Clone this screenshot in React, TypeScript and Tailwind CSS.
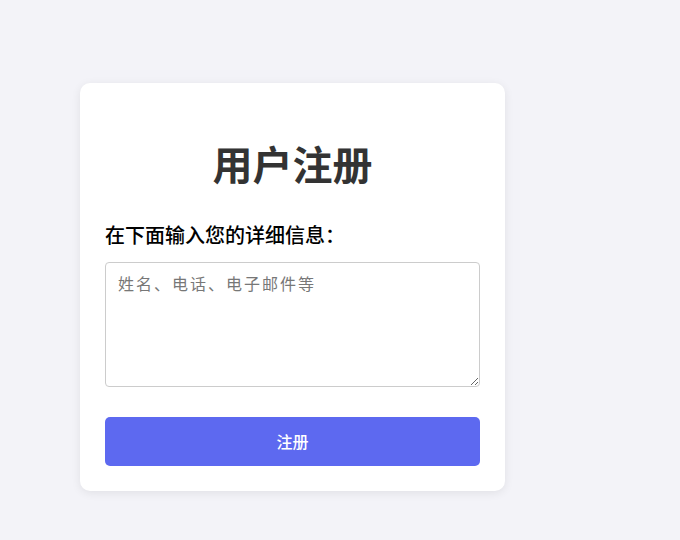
import React from 'react'

export default function App() {
  return (
    <div
      className="min-h-[540px] w-full bg-[#f3f3f8] pt-[83px] pl-[80px]"
      style={{ fontFamily: '"Noto Sans", "Noto Sans CJK SC", sans-serif' }}
    >
      <div className="w-[425px] rounded-[10px] bg-white p-[25px] shadow-[0_2px_10px_rgba(0,0,0,0.08)]">
        {/* Title */}
        <h1 className="mt-[33px] mb-[33px] text-center text-[40px] font-bold leading-[48px] text-[#333]">
          用户注册
        </h1>

        <label className="block text-[20px] font-medium leading-[28px] text-black">
          在下面输入您的详细信息：
        </label>

        <textarea
          className="mt-[12px] block h-[125px] w-full rounded-[4px] border border-[#ccc] px-[12px] py-[9px] text-[16px] tracking-[2px] text-[#333] placeholder:text-[#777] outline-none"
          placeholder="姓名、电话、电子邮件等"
        />

        <button className="mt-[30px] block h-[49px] w-full rounded-[5px] bg-[#5d69f0] text-[16px] font-medium text-white">
          注册
        </button>
      </div>
    </div>
  )
}
